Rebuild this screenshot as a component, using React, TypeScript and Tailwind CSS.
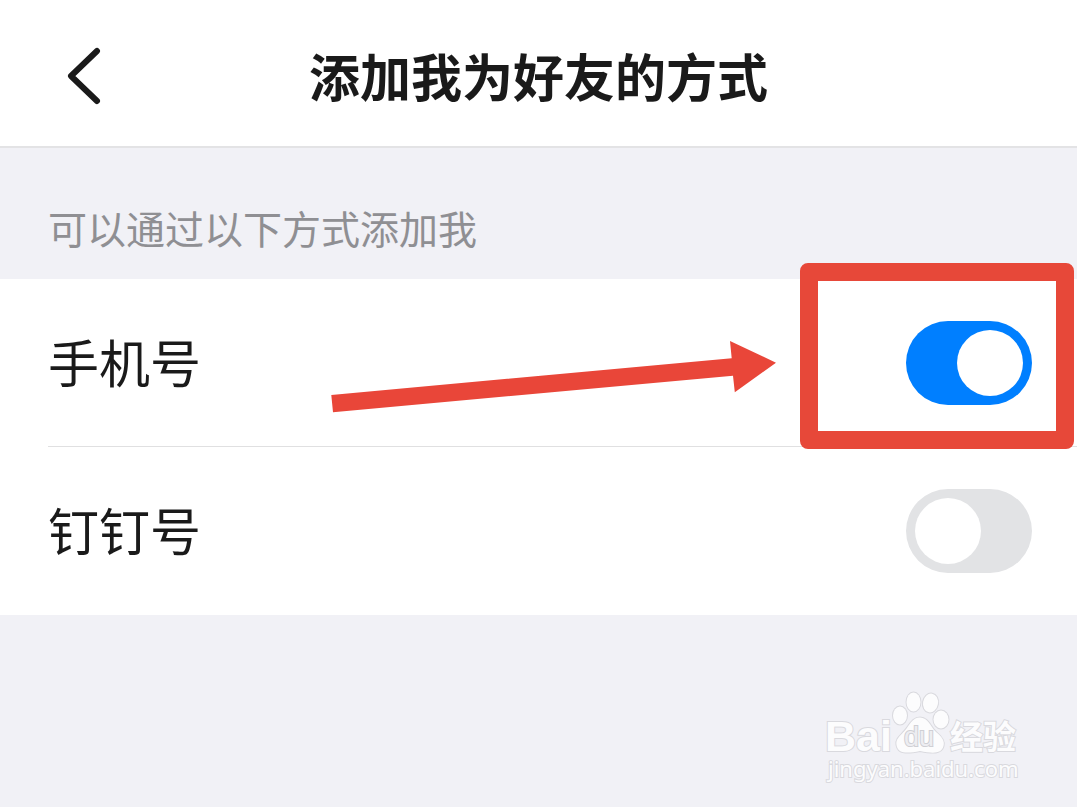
import React, { useState } from 'react';

const METHODS = [
  { id: 'phone', label: '手机号', enabled: true },
  { id: 'dingtalk', label: '钉钉号', enabled: false },
];

/**
 * Red frame and arrow that point at a row's switch
 */
function Callout() {
  return (
    <>
      <svg
        className="pointer-events-none absolute top-[62px] right-[301px] h-[72px] w-[446px]"
        viewBox="330 341 446 72"
        aria-hidden="true"
      >
        <path d="M331.3 395 L731.7 358.3 L730 341 L776 362.7 L734.8 392.3 L733 375.7 L333 412.3 Z" fill="#e94639" />
      </svg>
      <div className="pointer-events-none absolute -top-4 right-[3px] -bottom-0.5 w-[274px] rounded-lg border-[18px] border-[#e74839]" />
    </>
  );
}

function Watermark() {
  return (
    <div className="pointer-events-none self-end pr-14 pb-6">
      <svg
        className="h-[92px] w-[197px]"
        viewBox="824 691 197 92"
        fill="#fcfcfd"
        stroke="#d9d9de"
        strokeWidth="2"
        style={{ paintOrder: 'stroke' }}
      >
        <text x="825" y="751" fontSize="43" fontWeight="700" fontFamily='"Liberation Sans", sans-serif'>Bai</text>
        <ellipse cx="900" cy="715.5" rx="7" ry="9" />
        <ellipse cx="913.5" cy="702" rx="7" ry="9.5" />
        <ellipse cx="930.5" cy="703" rx="7.5" ry="9.5" transform="rotate(10 930.5 703)" />
        <ellipse cx="941" cy="719.5" rx="7.5" ry="9" />
        <path d="M920 717.5 C928 717.5 930 726 936 732 C942 737 945 741 943.5 746 C941.5 754 933 753.5 920 751 C907 753.5 898 754 896.5 745 C895.5 739 900 736 904.5 731 C910 725 912 717.5 920 717.5 Z" />
        <text x="904" y="746" fontSize="27" fontFamily='"Liberation Sans", sans-serif' fill="#ededf1" stroke="#cfcfd4">du</text>
        <text x="950" y="749" fontSize="33" fontWeight="700" fontFamily='"Noto Sans CJK SC", sans-serif'>经验</text>
        <text x="828" y="777" fontSize="22" fontFamily='"Noto Sans", sans-serif'>jingyan.baidu.com</text>
      </svg>
    </div>
  );
}

export default function App() {
  const [methods, setMethods] = useState(METHODS);

  const toggle = (id: string) => {
    setMethods(methods.map((m) => (m.id === id ? { ...m, enabled: !m.enabled } : m)));
  };

  return (
    <div className="flex min-h-screen flex-col overflow-x-hidden bg-[#f1f1f6] font-['Noto_Sans_CJK_SC',sans-serif] text-[#1a1a1a]">
      {/* HEADER */}
      <header className="grid h-[148px] grid-cols-[120px_1fr_120px] items-center border-b-2 border-[#e3e3e5] bg-white pt-1">
        <button type="button" aria-label="返回" className="flex h-20 items-center pl-16">
          <svg className="h-[60px] w-10" viewBox="0 0 40 60" fill="none" stroke="currentColor" strokeWidth="6" strokeLinecap="round" strokeLinejoin="round">
            <path d="M33 6 L7 31 L33 56" />
          </svg>
        </button>
        <h1 className="text-center text-[51px] leading-[72px] font-bold whitespace-nowrap">添加我为好友的方式</h1>
      </header>

      <main className="flex-1">
        <h2 className="px-12 pt-[51px] pb-6 text-[39px] leading-[56px] font-normal text-[#8f8f93]">可以通过以下方式添加我</h2>

        <ul className="bg-white">
          {methods.map((method, i) => (
            <li key={method.id} className="relative pl-12">
              <div className={`flex h-[168px] items-center justify-between pr-[45px] ${i === 0 ? 'border-b border-[#e0e0e1]' : ''}`}>
                <label htmlFor={method.id} className="pb-1 text-[51px] leading-[72px]">
                  {method.label}
                </label>
                <input
                  id={method.id}
                  type="checkbox"
                  role="switch"
                  checked={method.enabled}
                  onChange={() => toggle(method.id)}
                  className="h-[84px] w-[126px] shrink-0 cursor-pointer appearance-none rounded-full bg-[#e2e3e5] p-[9px] transition-colors before:block before:size-[66px] before:rounded-full before:bg-white before:content-[''] checked:bg-[#007fff] checked:before:translate-x-[42px]"
                />
              </div>
              {method.id === 'phone' && <Callout />}
            </li>
          ))}
        </ul>
      </main>

      <Watermark />
    </div>
  );
}
